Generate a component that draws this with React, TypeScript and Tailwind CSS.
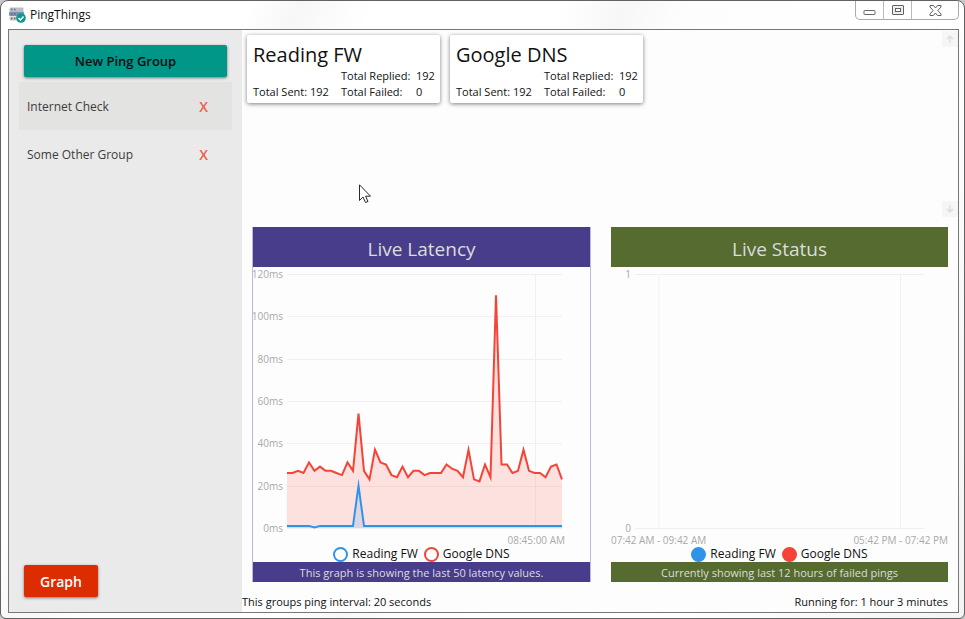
import type { ReactNode } from "react";

const BLUE = "#2f94e8";
const RED = "#f54337";

const google = [
  26, 26, 27, 26, 31, 27, 29, 27, 27, 26, 25, 31, 27, 54, 27, 23, 37, 31, 30, 25, 24, 29, 24, 27, 27, 25, 26,
  26, 26, 30, 28, 27, 24, 37, 23, 22, 30, 24, 110, 30, 30, 26, 27, 37, 27, 26, 26, 24, 29, 30, 23,
];
const reading = google.map((_, i) => (i === 13 ? 20 : i === 5 ? 0.3 : 1));

const MAX_MS = 120;
const PLOT_W = 275;
const PLOT_H = 254;

function toLine(values: number[]) {
  return values
    .map((v, i) => `${(i * PLOT_W) / (values.length - 1)},${PLOT_H - (v * PLOT_H) / MAX_MS}`)
    .join(" ");
}

function Series({ values, color, fill }: { values: number[]; color: string; fill: string }) {
  const line = toLine(values);
  return (
    <>
      <polygon points={`0,${PLOT_H} ${line} ${PLOT_W},${PLOT_H}`} fill={fill} />
      <polyline
        points={line}
        fill="none"
        stroke={color}
        strokeWidth="2"
        strokeMiterlimit="10"
        vectorEffect="non-scaling-stroke"
      />
    </>
  );
}

function AppIcon() {
  return (
    <svg width="17" height="17" viewBox="0 0 17 17" aria-hidden="true">
      <rect x="0.500" y="0.500" width="14" height="4" rx="1" fill="#b9bec8" />
      <rect x="0" y="4.500" width="15" height="4.500" rx="1" fill="#7f93b2" />
      <rect x="0.500" y="9.500" width="13" height="4" rx="1" fill="#c3c6cc" />
      <path d="M2 2.500h1.500M5 2.500h1.500M2 7h1.500M5 7h1.500M2 11.500h1.500M5 11.500h1.500" stroke="#5f6c80" strokeWidth="1.500" />
      <circle cx="12" cy="11" r="4.800" fill="#0c9790" />
      <path d="M9.500 11l2 2 3-3.500" fill="none" stroke="#fff" strokeWidth="1.500" />
    </svg>
  );
}

function TitleBar() {
  return (
    <header className="flex h-7 items-start justify-between pl-px">
      <div className="flex items-center gap-1 pt-1">
        <AppIcon />
        <h1 className="text-xs leading-5 text-[#111]">PingThings</h1>
      </div>
      <div className="flex h-[19px] rounded-b-[5px] border border-t-0 border-[#aaa] bg-white/60">
        <button aria-label="Minimize" className="flex w-7 items-center justify-center border-r border-[#bbb]">
          <svg width="13" height="12" viewBox="0 0 13 12">
            <rect x="1" y="6.500" width="11" height="4" rx="0.500" fill="#fff" stroke="#6a6a6a" />
          </svg>
        </button>
        <button aria-label="Maximize" className="flex w-7 items-center justify-center border-r border-[#bbb]">
          <svg width="12" height="12" viewBox="0 0 12 12">
            <rect x="0.500" y="1.500" width="11" height="9" rx="0.500" fill="#eee" stroke="#626262" />
            <rect x="3.500" y="4.500" width="5" height="3" fill="#fff" stroke="#626262" />
          </svg>
        </button>
        <button aria-label="Close" className="flex w-[46px] items-center justify-center">
          <svg width="13" height="11" viewBox="0 0 13 11">
            <path
              d="M1 .5h3.500L6.500 3 8.500 .5H12v1.500L8.800 5.500 12 9v1.500H8.500L6.500 8l-2 2.500H1V9l3.200-3.500L1 2z"
              fill="#fff"
              stroke="#626262"
              strokeLinejoin="round"
            />
          </svg>
        </button>
      </div>
    </header>
  );
}

function GroupItem({ name, selected = false }: { name: string; selected?: boolean }) {
  return (
    <li className={selected ? "flex h-12 items-center bg-[#e3e3e2] pt-px pr-6 pl-2" : "flex h-12 items-center pt-px pr-6 pl-2"}>
      <button className="flex-1 text-left text-xs text-[#3c3c3c]">{name}</button>
      <button aria-label={`Delete ${name}`} className="text-sm font-semibold text-[#e8604f]">
        X
      </button>
    </li>
  );
}

function Sidebar() {
  return (
    <aside className="flex w-[233px] shrink-0 flex-col justify-between bg-[#eaeaea] px-2.5 py-[15px]">
      <div>
        <div className="mb-[5px] px-[5px]">
          <button className="h-8 w-full rounded-xs bg-[#009688] pt-0.5 text-[13px] font-semibold text-[#0a0a12] shadow-[0_1px_3px_rgba(0,0,0,0.5)]">
            New Ping Group
          </button>
        </div>
        <ul>
          <GroupItem name="Internet Check" selected />
          <GroupItem name="Some Other Group" />
        </ul>
      </div>
      <div className="px-[5px]">
        <button className="h-8 rounded-xs bg-[#dd2c00] px-4 pt-0.5 text-sm font-semibold text-white shadow-[0_1px_3px_rgba(0,0,0,0.5)]">
          Graph
        </button>
      </div>
    </aside>
  );
}

function HostCard({ name, sent, replied, failed }: { name: string; sent: number; replied: number; failed: number }) {
  return (
    <article className="h-[68px] w-[193px] rounded-xs bg-white pt-1.5 pr-1 pl-1.5 shadow-[0_1px_4px_rgba(0,0,0,0.5)]">
      <h2 className="text-xl leading-[27px] text-[#111]">{name}</h2>
      <div className="flex items-end justify-between text-[11px] leading-4 text-[#111]">
        <span>Total Sent: {sent}</span>
        <dl className="grid grid-cols-[75px_20px]">
          <dt>Total Replied:</dt>
          <dd>{replied}</dd>
          <dt>Total Failed:</dt>
          <dd>{failed}</dd>
        </dl>
      </div>
    </article>
  );
}

function ScrollButton({ label, path }: { label: string; path: string }) {
  return (
    <button aria-label={label} className="flex h-4 w-4 items-center justify-center bg-[#f6f6f6]">
      <svg width="8" height="8" viewBox="0 0 8 8" fill="none" stroke="#dedede" strokeWidth="1.500">
        <path d={path} />
      </svg>
    </button>
  );
}

function YAxis({ ticks }: { ticks: string[] }) {
  return (
    <div className="-my-1.5 flex h-[266px] shrink-0 flex-col justify-between text-right text-[10px] leading-3 text-[#a9a9a9]">
      {ticks.map((t) => (
        <span key={t}>{t}</span>
      ))}
    </div>
  );
}

function LegendEntry({ color, name, hollow = false }: { color: string; name: string; hollow?: boolean }) {
  return (
    <span className="flex items-center gap-1">
      <svg width="15" height="15" viewBox="0 0 15 15" aria-hidden="true">
        <circle cx="7.500" cy="7.500" r="6.500" fill={hollow ? "#fff" : color} stroke={color} strokeWidth="2" />
      </svg>
      {name}
    </span>
  );
}

function Legend({ hollow = false }: { hollow?: boolean }) {
  return (
    <div className="flex h-4 items-center justify-center gap-1.5 text-xs text-[#111]">
      <LegendEntry color={BLUE} name="Reading FW" hollow={hollow} />
      <LegendEntry color={RED} name="Google DNS" hollow={hollow} />
    </div>
  );
}

type PanelProps = { title: string; note: string; frame: string; bar: string; children: ReactNode };

function Panel({ title, note, frame, bar, children }: PanelProps) {
  return (
    <section className={`flex min-w-0 flex-1 flex-col ${frame}`}>
      <h2 className={`h-10 pt-0.5 text-center text-[19px] leading-10 text-[#dcdcdc] ${bar}`}>{title}</h2>
      {children}
      <p className={`h-5 text-center text-[11px] leading-[22px] text-[#dcdcdc] ${bar}`}>{note}</p>
    </section>
  );
}

function LatencyChart() {
  return (
    <div className="flex h-[295px] flex-col pt-[7px]">
      <div className="flex h-[254px] pr-7">
        <div className="flex w-[34px] shrink-0 justify-end pr-1">
          <YAxis ticks={["120ms", "100ms", "80ms", "60ms", "40ms", "20ms", "0ms"]} />
        </div>
        <svg
          className="h-full min-w-0 flex-1 overflow-visible"
          viewBox={`0 0 ${PLOT_W} ${PLOT_H}`}
          preserveAspectRatio="none"
          role="img"
          aria-label="Live latency"
        >
          {[0, 20, 40, 60, 80, 100, 120].map((v) => {
            const y = Math.round(PLOT_H - (v * PLOT_H) / MAX_MS) + 0.5;
            return <line key={v} x1="0" x2={PLOT_W} y1={y} y2={y} stroke="#f0f0f0" />;
          })}
          <line x1="248.500" x2="248.500" y1="0" y2={PLOT_H} stroke="#f0f0f0" />
          <Series values={google} color={RED} fill="rgba(245,67,55,0.15)" />
          <Series values={reading} color={BLUE} fill="rgba(47,148,232,0.15)" />
        </svg>
      </div>
      <div className="mt-1.5 flex h-3 justify-end pr-[25px] text-[10px] leading-3 text-[#a9a9a9]">08:45:00 AM</div>
      <Legend hollow />
    </div>
  );
}

function StatusChart() {
  return (
    <div className="flex h-[295px] flex-col pt-[7px]">
      <div className="flex h-[254px] pr-6">
        <div className="flex w-6 shrink-0 justify-end pr-1">
          <YAxis ticks={["1", "0"]} />
        </div>
        <svg
          className="h-full min-w-0 flex-1 overflow-visible"
          viewBox="0 0 290 254"
          preserveAspectRatio="none"
          role="img"
          aria-label="Live status"
        >
          <path d="M0 .5H290M0 254.500H290M266.500 0V254" stroke="#f0f0f0" />
          <path d="M24 0V254" stroke="#f7f7f7" strokeWidth="2" />
        </svg>
      </div>
      <div className="mt-1.5 flex h-3 justify-between text-[10px] leading-3 text-[#a9a9a9]">
        <span>07:42 AM - 09:42 AM</span>
        <span>05:42 PM - 07:42 PM</span>
      </div>
      <Legend />
    </div>
  );
}

function Cursor() {
  return (
    <svg className="absolute top-[184px] left-[359px]" width="13" height="20" viewBox="0 0 13 20" aria-hidden="true">
      <path d="M.5 .8V16.500L4 13l2.500 5.500 2.500-1-2.400-5.300H11.500z" fill="#fff" stroke="#222a38" />
    </svg>
  );
}

export default function App() {
  return (
    <div className="relative flex min-h-screen flex-col bg-[#c8c8c8] font-['Open_Sans','Noto_Sans',sans-serif]">
      <div className="flex flex-1 flex-col rounded-t-lg rounded-b-md border border-[#626262] bg-linear-[115deg,#ffffff_0%,#ffffff_20%,#f7f7f7_24%,#ffffff_30%,#ffffff_45%,#f7f7f7_50%,#fdfdfd_55%,#ffffff_75%,#f4f4f4_100%] pr-[5px] pb-[5px] pl-[7px]">
        <TitleBar />
        <main className="flex flex-1 border border-[#777] bg-[#fdfdfd]">
          <Sidebar />
          <div className="flex min-w-0 flex-1 flex-col">
            <div className="flex flex-1 justify-between pt-px pl-[5px]">
              <div className="flex flex-wrap content-start gap-2.5 pt-1">
                <HostCard name="Reading FW" sent={192} replied={192} failed={0} />
                <HostCard name="Google DNS" sent={192} replied={192} failed={0} />
              </div>
              <div className="flex flex-col justify-between">
                <ScrollButton label="Scroll up" path="M4 8V1M1 4l3-3 3 3" />
                <ScrollButton label="Scroll down" path="M4 0v7M1 4l3 3 3-3" />
              </div>
            </div>
            <div className="flex gap-5 px-2.5 pt-2.5">
              <Panel
                title="Live Latency"
                note="This graph is showing the last 50 latency values."
                frame="border-x border-[#bdb8d8]"
                bar="bg-[#483d8b]"
              >
                <LatencyChart />
              </Panel>
              <Panel title="Live Status" note="Currently showing last 12 hours of failed pings" frame="" bar="bg-[#556b2f]">
                <StatusChart />
              </Panel>
            </div>
            <footer className="flex h-[30px] items-end justify-between pr-2.5 text-[11px] leading-5 text-[#111]">
              <span>This groups ping interval: 20 seconds</span>
              <span>Running for: 1 hour 3 minutes</span>
            </footer>
          </div>
        </main>
      </div>
      <Cursor />
    </div>
  );
}
